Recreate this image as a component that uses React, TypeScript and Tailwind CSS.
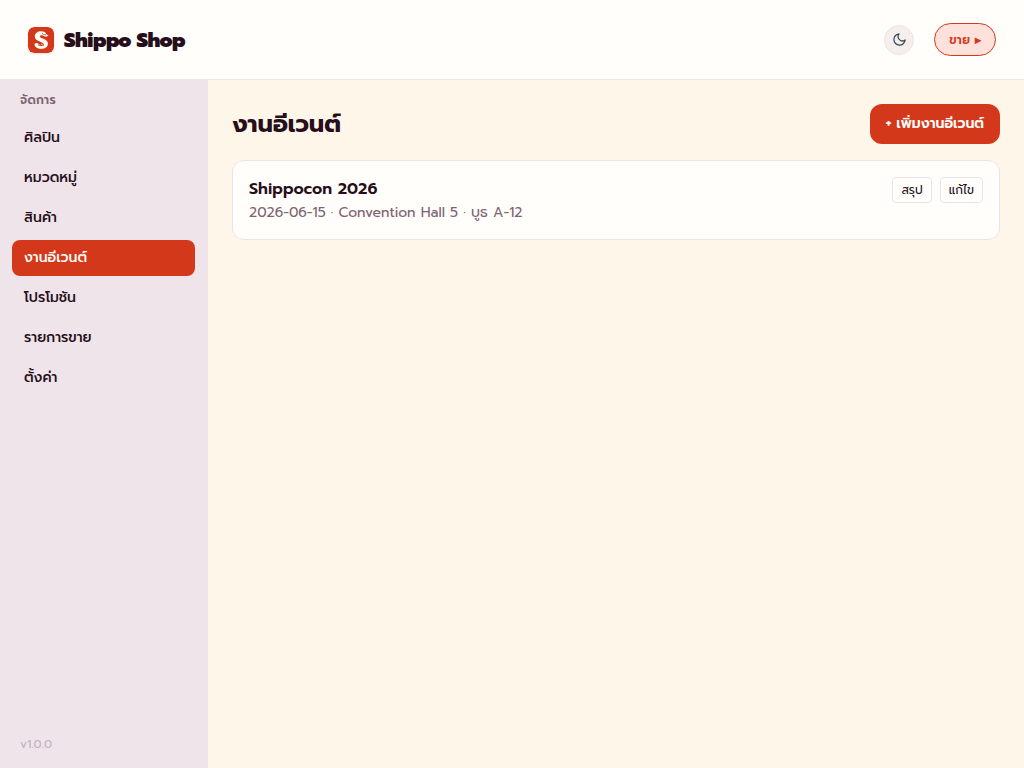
const menu = [
    { label: 'ศิลปิน', href: '#artists' },
    { label: 'หมวดหมู่', href: '#categories' },
    { label: 'สินค้า', href: '#products' },
    { label: 'งานอีเวนต์', href: '#events', active: true },
    { label: 'โปรโมชัน', href: '#promotions' },
    { label: 'รายการขาย', href: '#sales' },
    { label: 'ตั้งค่า', href: '#settings' },
];

function Logo() {
    return (
        <svg viewBox="0 0 26 26" className="size-[26px] rounded-md shadow-sm" aria-hidden="true">
            <rect width="26" height="26" rx="6" fill="#d4381a" />
            <path
                d="M19 9.2C17.6 9.8 16.8 9.4 15.8 8.9C13.8 8 11.9 8.2 11.9 9.5C11.9 12 19.9 11.4 19.9 16.7C19.9 20.1 16.8 21.9 13 21.9C9.3 21.9 6.6 20.1 6.4 17.1C7.3 15.7 9.3 15.6 10.4 16.6C10.7 18.4 11.6 19.1 13.1 19.1C14.6 19.1 15.5 18.4 15.5 17.4C15.5 14.6 6.8 14.8 6.8 9.6C6.8 6.3 9.5 4.3 13.1 4.3C15.9 4.3 17.9 5.6 18.4 7.3L20.7 8.9Z"
                fill="#fffdf8"
            />
            <path d="M14.1 5.9L15.4 7.7L18.2 7.7" fill="none" stroke="#d4381a" strokeWidth="0.8" />
            <path d="M10.6 16.6h4.9v2.5h-4.9z" fill="#d4381a" />
            <path d="M11.8 17.1v1.4M13 17.3h1.4v1.1" fill="none" stroke="#fffdf8" strokeWidth="0.6" />
        </svg>
    );
}

function MoonIcon() {
    return (
        <svg
            viewBox="0 0 24 24"
            className="size-[15px]"
            fill="none"
            stroke="currentColor"
            strokeWidth="2"
            strokeLinecap="round"
            strokeLinejoin="round"
            aria-hidden="true"
        >
            <path d="M21 12.79A9 9 0 1 1 11.21 3 7 7 0 0 0 21 12.79z" />
        </svg>
    );
}

export default function App() {
    return (
        <div className="flex min-h-screen flex-col bg-[#fff6ea] font-['Prompt','Noto_Sans',sans-serif] text-[#260f1a]">
            <header className="flex h-20 items-center justify-between border-b border-[#e5e7eb] bg-[#fffefa] px-7">
                <div className="flex items-center gap-2.5">
                    <Logo />
                    <span className="text-xl font-black tracking-tight">Shippo Shop</span>
                </div>
                <div className="flex items-center gap-5">
                    <button
                        type="button"
                        aria-label="โหมดมืด"
                        className="flex size-[30px] items-center justify-center rounded-full border border-[#e5e7eb] bg-[#f5eeeb] text-[#34495a]"
                    >
                        <MoonIcon />
                    </button>
                    <button
                        type="button"
                        className="flex h-[33px] items-center rounded-full border border-[#d4381a] bg-[#ffe1db] px-3.5 text-xs font-semibold tracking-wide text-[#d4381a]"
                    >
                        ขาย ▸
                    </button>
                </div>
            </header>

            <div className="flex flex-1">
                <aside className="flex w-52 shrink-0 flex-col bg-[#efe4ea] pt-3 pr-[13px] pb-4 pl-3">
                    <h2 className="mb-3 px-2 text-xs leading-4 font-semibold tracking-wide text-[#806272]">จัดการ</h2>
                    <nav className="flex flex-col gap-1">
                        {menu.map((item) => (
                            <a
                                key={item.href}
                                href={item.href}
                                className={
                                    item.active
                                        ? 'flex h-9 items-center rounded-lg bg-[#d4381a] px-3 text-sm font-medium text-[#fffefa]'
                                        : 'flex h-9 items-center rounded-lg px-3 text-sm font-medium'
                                }
                            >
                                {item.label}
                            </a>
                        ))}
                    </nav>
                    <p className="mt-auto px-2 text-xs text-[#c4b0bb]">v1.0.0</p>
                </aside>

                <main className="min-w-0 flex-1 p-6">
                    <div className="mb-4 flex items-center justify-between">
                        <h1 className="text-2xl font-bold">งานอีเวนต์</h1>
                        <button
                            type="button"
                            className="flex h-10 items-center rounded-xl bg-[#d4381a] px-4 text-sm font-semibold text-[#fffefa]"
                        >
                            + เพิ่มงานอีเวนต์
                        </button>
                    </div>

                    <article className="flex items-start justify-between rounded-xl border border-[#ede2ec] bg-[#fffefa] p-4">
                        <div>
                            <h3 className="text-base leading-6 font-semibold">Shippocon 2026</h3>
                            <p className="mt-0.5 text-sm leading-5 text-[#806272]">2026-06-15 · Convention Hall 5 · บูธ A-12</p>
                        </div>
                        <div className="flex gap-2">
                            <button type="button" className="flex h-[26px] items-center rounded border border-[#ede2ec] px-2 text-xs">
                                สรุป
                            </button>
                            <button type="button" className="flex h-[26px] items-center rounded border border-[#ede2ec] px-2 text-xs">
                                แก้ไข
                            </button>
                        </div>
                    </article>
                </main>
            </div>
        </div>
    );
}
